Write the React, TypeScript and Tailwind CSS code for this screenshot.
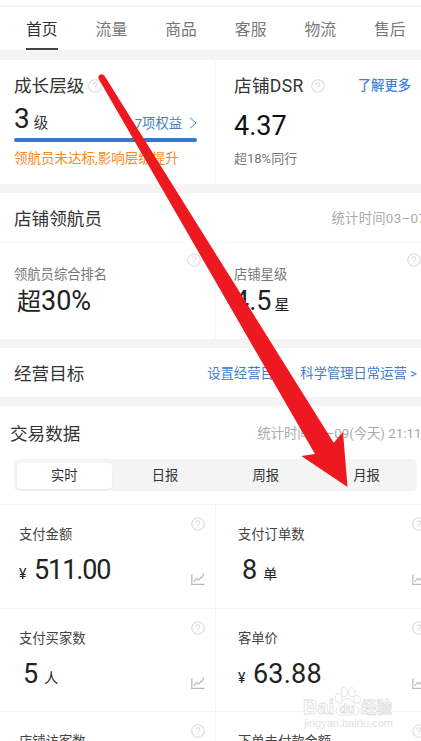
import React from "react";

const navItems = ["首页", "流量", "商品", "客服", "物流", "售后"];
const periods = ["实时", "日报", "周报", "月报"];

function Help() {
  return (
    <svg className="block h-[14px] w-[14px] shrink-0" viewBox="0 0 14 14" fill="none" stroke="#dcdcdc">
      <circle cx="7" cy="7" r="6.3" strokeWidth="1.1" />
      <path d="M5.1 5.6C5.1 4.4 5.9 3.8 7 3.8s1.900.7 1.900 1.700C8.900 6.800 7 6.800 7 8.400M7 9.400v1.100" strokeWidth="1.1" />
    </svg>
  );
}

function Trend() {
  return (
    <svg className="block h-[14px] w-[14px] shrink-0" viewBox="0 0 14 14" fill="none" stroke="#bcbcbc">
      <path d="M.8 2.5v9.8h12.7" strokeWidth="1.3" />
      <path d="M2.7 9.8l2.6-3.3 2.3 1.8 2-3 1 .5L13.2 1.4" strokeWidth="1.1" />
    </svg>
  );
}

type MetricProps = {
  label: string;
  value?: string;
  unit?: string;
  money?: boolean;
  right?: boolean;
  spacing?: string;
};

function Metric({ label, value, unit, money, right, spacing = "" }: MetricProps) {
  return (
    <div
      className={`flex h-full shrink-0 justify-between ${
        right ? "w-[221px] border-l border-[#f5f5f5] pl-[22px] pr-[10px]" : "w-[215px] pl-[19px] pr-[10px]"
      }`}
    >
      <div className="pt-[20px]">
        <div className="text-[13.3px] leading-5 text-[#444]">{label}</div>
        {value && (
          <div className="mt-[9px] flex items-baseline leading-8 text-[#222]">
            {money && <span className="w-[15px] text-[14px]">¥</span>}
            <span className={`text-[27px] ${money ? "" : "pl-[4px]"} ${spacing}`}>{value}</span>
            {unit && <span className="pl-[6px] text-[14px]">{unit}</span>}
          </div>
        )}
      </div>
      <div className="flex h-[81px] flex-col justify-between pt-[12px]">
        <Help />
        <Trend />
      </div>
    </div>
  );
}

function Arrow() {
  return (
    <svg className="pointer-events-none absolute left-0 top-0 h-[741px] w-[421px]" viewBox="0 0 421 741">
      <path
        d="M98.7 79Q97.5 75.5 100.5 74.5Q103 73.8 104.6 76L333.7 442.7L343 432L347.5 487L301.3 456L315 454Z"
        fill="#ee1820"
      />
    </svg>
  );
}

function Watermark() {
  return (
    <svg
      className="pointer-events-none absolute left-[300px] top-[684px] h-[50px] w-[100px] font-['Liberation_Sans','Noto_Sans_CJK_SC',sans-serif]"
      viewBox="300 684 100 50"
      fill="#fff"
      stroke="#dedede"
      strokeWidth="0.8"
    >
      <text x="303" y="714" fontSize="20" fontWeight="700" textLength="31" lengthAdjust="spacingAndGlyphs">Bai</text>
      <ellipse cx="338.7" cy="698" rx="3.4" ry="4.4" />
      <ellipse cx="344.3" cy="692" rx="3.2" ry="4.6" />
      <ellipse cx="352" cy="692.3" rx="3.2" ry="4.4" />
      <ellipse cx="357" cy="699.5" rx="3.4" ry="4" />
      <path d="M347 698.5c-4 0-5 4.5-8 7-5 4-3 9.5 1.5 9.5h14c5 0 6-5.5 2-9-3.5-3-5-7.5-9.5-7.5z" />
      <text x="339.5" y="712.5" fontSize="12" fontWeight="700" textLength="15" lengthAdjust="spacingAndGlyphs">du</text>
      <text x="361" y="713" fontSize="15.5" fontWeight="700">经验</text>
      <text x="304" y="727" fontSize="10.5" fill="#e2e2e2" stroke="none" textLength="89" lengthAdjust="spacingAndGlyphs">
        jingyan.baidu.com
      </text>
    </svg>
  );
}

export default function App() {
  return (
    <div className="relative h-[741px] w-[421px] overflow-hidden whitespace-nowrap bg-white font-['Roboto','Noto_Sans_CJK_SC',sans-serif] text-[#333]">
      <div className="h-[7px] border-b-2 border-[#f5f5f5]" />
      <nav className="flex h-[43px] gap-[38px] pl-[26px]">
        {navItems.map((item, i) => (
          <div
            key={item}
            className={`flex h-full shrink-0 justify-center border-b-2 pt-[11px] text-[15.8px] leading-6 ${
              i === 0 ? "border-[#444] text-[#333]" : "border-transparent text-[#777]"
            }`}
          >
            {item}
          </div>
        ))}
      </nav>

      <div className="h-[10px] bg-[#f4f4f4]" />
      <section className="flex h-[124px]">
        <div className="w-[215px] shrink-0 pl-[14px] pr-[18px] pt-[14px]">
          <div className="flex items-center gap-[4px] text-[17.6px] leading-6">
            成长层级
            <Help />
          </div>
          <div className="flex h-[40px] items-baseline leading-[42px]">
            <span className="text-[28px] text-[#222]">3</span>
            <span className="pl-[4px] text-[14.5px]">级</span>
            <span className="ml-auto text-[13.3px] text-[#4480c8]">7项权益</span>
            <svg className="ml-[7px] mt-[9px] h-[12px] w-[8px] self-center" viewBox="0 0 8 12" fill="none" stroke="#4480c8">
              <path d="M1 .7L7 6L1 11.3" />
            </svg>
          </div>
          <div className="h-[4px] rounded-full bg-[#3977c8]" />
          <div className="mt-[6px] text-[13.5px] leading-5 text-[#f78a1d]">领航员未达标,影响层级提升</div>
        </div>
        <div className="w-[206px] shrink-0 border-l border-[#f5f5f5] pl-[18px] pt-[14px]">
          <div className="flex items-center text-[17.6px] leading-6">
            <span className="tracking-[0.3px]">店铺DSR</span>
            <span className="ml-[7px]">
              <Help />
            </span>
            <span className="ml-auto mr-[10px] text-[13.3px] font-medium text-[#3d82dc]">了解更多</span>
          </div>
          <div className="mt-[12px] text-[27px] leading-8 text-[#111]">4.37</div>
          <div className="mt-[7px] text-[13px] leading-5 text-[#777]">超18%同行</div>
        </div>
      </section>

      <div className="h-[9px] bg-[#f4f4f4]" />
      <section className="h-[146px]">
        <div className="flex h-[50px] w-[436px] items-center justify-between border-b border-[#f6f6f6] pl-[14px] pr-[10px] pt-[3px]">
          <h2 className="text-[17.6px]">店铺领航员</h2>
          <span className="text-[13.3px] tracking-[0.3px] text-[#aaa]">统计时间03–07</span>
        </div>
        <div className="flex h-[96px] w-[436px]">
          <div className="flex w-[215px] shrink-0 justify-between pl-[14px] pr-[14px]">
            <div className="pt-[22px]">
              <div className="text-[13.3px] leading-5 text-[#777]">领航员综合排名</div>
              <div className="pl-[3px] text-[27px] leading-8 text-[#222]">
                <span className="text-[24px]">超</span>30%
              </div>
            </div>
            <div className="pt-[10px]">
              <Help />
            </div>
          </div>
          <div className="flex w-[221px] shrink-0 justify-between border-l border-[#f5f5f5] pl-[18px] pr-[15px]">
            <div className="pt-[22px]">
              <div className="text-[13.3px] leading-5 text-[#777]">店铺星级</div>
              <div className="text-[27px] leading-8 text-[#222]">
                4.5<span className="pl-[3px] text-[15px]">星</span>
              </div>
            </div>
            <div className="pt-[10px]">
              <Help />
            </div>
          </div>
        </div>
      </section>

      <div className="h-[9px] bg-[#f4f4f4]" />
      <section className="flex h-[49px] items-center justify-between pl-[14px] pr-[4px] pt-[3px]">
        <h2 className="text-[17.6px]">经营目标</h2>
        <span className="text-[13.3px] text-[#4480c8]">设置经营目标，科学管理日常运营 &gt;</span>
      </section>
      <div className="h-[9px] bg-[#f4f4f4]" />

      <section>
        <div className="flex h-[53px] items-center pl-[10px] pt-[3px]">
          <h2 className="text-[17.6px]">交易数据</h2>
          <span className="ml-[177px] text-[13.3px] text-[#aaa]">统计时间03–09(今天) 21:11</span>
        </div>
        <div className="ml-[14px] flex h-[32px] w-[403px] rounded-[5px] bg-[#f4f4f4]">
          {periods.map((period, i) => (
            <div key={period} className="flex flex-1 items-center justify-center pt-px text-[13.3px] text-[#333]">
              {i === 0 ? (
                <div className="flex h-[26px] w-[95px] items-center justify-center rounded-[4px] bg-white pt-px shadow-xs">
                  {period}
                </div>
              ) : (
                <span className="pt-px">{period}</span>
              )}
            </div>
          ))}
        </div>
        <div className="mt-[13px] flex h-[104px] w-[436px] border-t border-[#f5f5f5]">
          <Metric label="支付金额" value="511.00" money spacing="tracking-[-1.1px]" />
          <Metric label="支付订单数" value="8" unit="单" right />
        </div>
        <div className="flex h-[103px] w-[436px] border-t border-[#f5f5f5]">
          <Metric label="支付买家数" value="5" unit="人" />
          <Metric label="客单价" value="63.88" money right spacing="tracking-[0.2px]" />
        </div>
        <div className="flex h-[104px] w-[436px] border-t border-[#f5f5f5]">
          <Metric label="店铺访客数" />
          <Metric label="下单未付款金额" right />
        </div>
      </section>
      <Arrow />
      <Watermark />
    </div>
  );
}
